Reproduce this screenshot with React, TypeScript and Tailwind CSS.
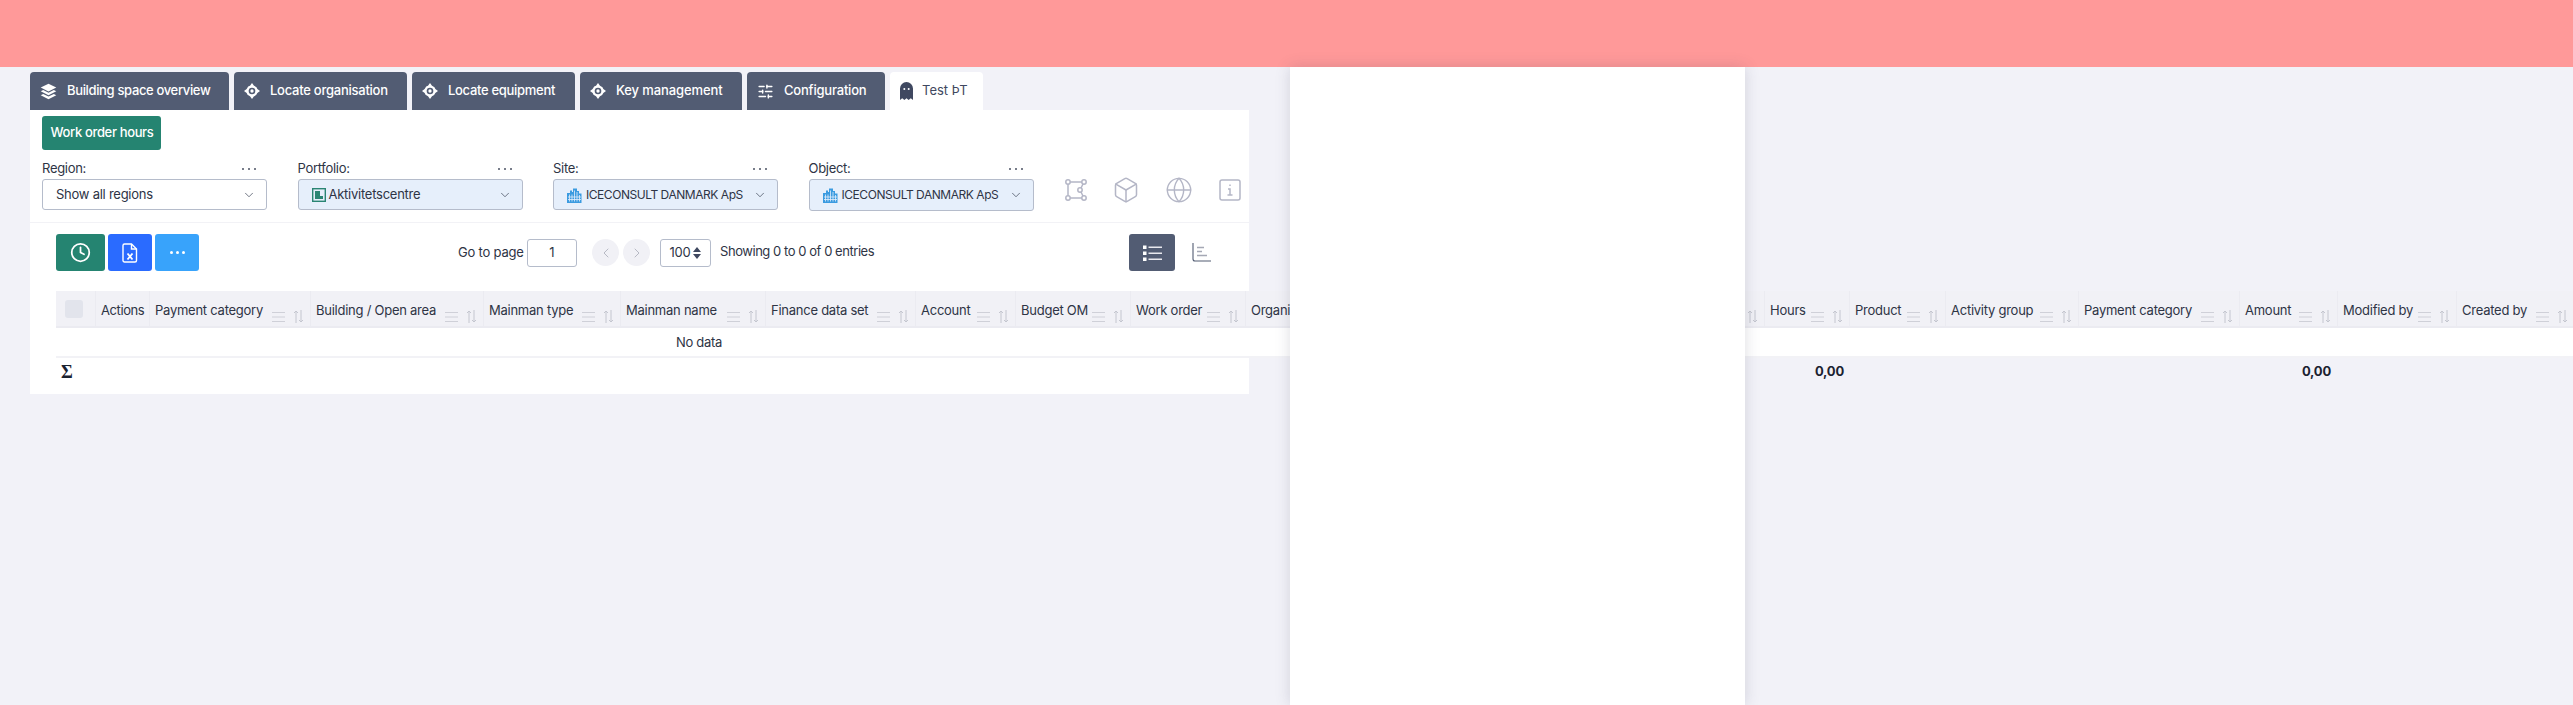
import React from "react";
import { Box, ChevronDown, ChevronLeft, ChevronRight, Clock, Globe, SlidersHorizontal } from "lucide-react";

const Layers = () => (
  <svg width="17" height="17" viewBox="0 0 24 24" fill="white">
    <path d="M12 1 L23 6.5 L12 12 L1 6.5Z" />
    <path d="M4.5 10 L12 13.8 L19.5 10 L23 11.8 L12 17.3 L1 11.8Z" />
    <path d="M4.5 15.5 L12 19.2 L19.5 15.5 L23 17.3 L12 23 L1 17.3Z" />
  </svg>
);
const Locate = () => (
  <svg width="16" height="16" viewBox="0 0 24 24">
    <path d="M12 0 L15 4 Q20 6 20 9 L24 12 L20 15 Q18 20 15 20 L12 24 L9 20 Q4 18 4 15 L0 12 L4 9 Q6 4 9 4Z" fill="white" />
    <circle cx="12" cy="12" r="5" fill="#525c73" />
    <circle cx="12" cy="12" r="2.5" fill="white" />
  </svg>
);
const Ghost = () => (
  <svg width="13" height="18" viewBox="0 0 13 18" className="text-[#3f4860]">
    <path d="M0 6.5a6.5 6.5 0 0 1 13 0V18l-2.2-1.8L8.6 18l-2.1-1.8L4.400 18l-2.200-1.800L0 18Z" fill="currentColor" />
    <circle cx="4.300" cy="7" r="1" fill="white" />
    <circle cx="8.700" cy="7" r="1" fill="white" />
  </svg>
);
const City = () => (
  <svg width="16" height="16" viewBox="0 0 16 16" className="shrink-0">
    <path d="M0 6h3V3.500h2V5h1V1.500h4V4h2v2.500h2.500V16H0Z" fill="#3b9be0" />
    <path d="M2.500 7.500v7M5 7.500v7M7.500 3.500v11M10 5v9.500M12.500 8v6.500M1 10h13M1 12.500h13" stroke="#e6effb" strokeWidth="0.8" />
  </svg>
);
const Picture = () => (
  <svg width="14" height="14" viewBox="0 0 14 14" className="shrink-0">
    <rect x="0.700" y="0.700" width="12.600" height="12.600" fill="#e6effb" stroke="#2a8573" strokeWidth="1.400" />
    <path d="M3 3h5v5h3v3H3Z" fill="#2a8573" />
  </svg>
);
const BoundingBox = () => (
  <svg width="22" height="22" viewBox="0 0 22 22" fill="none" stroke="#b4b6c6" strokeWidth="1.500">
    <circle cx="3" cy="3" r="2.200" />
    <circle cx="19" cy="3" r="2.200" />
    <circle cx="3" cy="19" r="2.200" />
    <circle cx="19" cy="19" r="2.200" />
    <circle cx="15" cy="11" r="2.200" />
    <path d="M5.200 3h11.600M5.200 19h11.600M3 5.200v11.600M18 5l-2 4M16 13l2 4" />
  </svg>
);
const InfoSquare = () => (
  <svg width="22" height="22" viewBox="0 0 22 22" fill="none" stroke="#b4b6c6" strokeWidth="1.500">
    <rect x="1" y="1" width="20" height="20" rx="2" />
    <path d="M11 5.500v1.500M9 10h2v6M8.500 16h5" />
  </svg>
);
const FileExcel = () => (
  <svg width="16" height="20" viewBox="0 0 16 20" fill="none" stroke="white" strokeWidth="1.400">
    <path d="M2.500 1h7l5 5v11.500a1.500 1.500 0 0 1-1.500 1.500H2.500A1.500 1.500 0 0 1 1 17.500v-15A1.500 1.500 0 0 1 2.500 1Z" />
    <path d="M9.500 1v5h5" />
    <path d="M5.500 10.500l5 6M10.500 10.500l-5 6" strokeWidth="1.800" />
  </svg>
);
const ListIcon = () => (
  <svg width="19" height="16" viewBox="0 0 19 16">
    <rect x="0" y="0.500" width="3.500" height="3.500" fill="white" />
    <rect x="0" y="6.500" width="3.500" height="3.500" fill="white" />
    <rect x="0" y="12.500" width="3.500" height="3.500" fill="white" />
    <rect x="5.500" y="1.500" width="13.500" height="1.500" fill="#e8e8ee" />
    <rect x="5.500" y="7.500" width="13.500" height="1.500" fill="#e8e8ee" />
    <rect x="5.500" y="13.500" width="13.500" height="1.500" fill="#e8e8ee" />
  </svg>
);
const ChartIcon = () => (
  <svg width="19" height="19" viewBox="0 0 19 19" fill="none">
    <path d="M1 0v16a2 2 0 0 0 2 2h16" stroke="#525c73" strokeWidth="1.100" />
    <path d="M5 4.500h7M5 8.500h5M5 12.500h10" stroke="#a5a8b5" strokeWidth="1.300" />
  </svg>
);
const Dots = ({ cls }: { cls: string }) => (
  <span className={`flex gap-[4px] ${cls}`}>
    <i className="size-[2px] rounded-full bg-current" />
    <i className="size-[2px] rounded-full bg-current" />
    <i className="size-[2px] rounded-full bg-current" />
  </span>
);
const ToolbarDots = () => (
  <span className="flex gap-[3px] text-white">
    <i className="size-[3px] rounded-full bg-current" />
    <i className="size-[3px] rounded-full bg-current" />
    <i className="size-[3px] rounded-full bg-current" />
  </span>
);
const ColIcons = () => (
  <span className="ml-auto flex shrink-0 items-center gap-[8px] pt-[6px] pr-[6px]">
    <svg width="13" height="12" viewBox="0 0 13 12" stroke="#cfd0d8" strokeWidth="1">
      <path d="M0 1.500h13M0 6h13M0 10.500h13" />
    </svg>
    <svg width="11" height="13" viewBox="0 0 11 13" fill="none" stroke="#c4c6cf" strokeWidth="1">
      <path d="M3 13V1M1 3l2-2 2 2M8 0v12M6 10l2 2 2-2" />
    </svg>
  </span>
);

const tabs = [
  { label: "Building space overview", w: "w-[199px]", icon: <Layers />, track: "tracking-[-0.35px]" },
  { label: "Locate organisation", w: "w-[173px]", icon: <Locate />, track: "tracking-[-0.25px]" },
  { label: "Locate equipment", w: "w-[163px]", icon: <Locate />, track: "tracking-[-0.3px]" },
  { label: "Key management", w: "w-[162px]", icon: <Locate />, track: "tracking-[-0.1px]" },
  { label: "Configuration", w: "w-[138px]", icon: <SlidersHorizontal size={17} color="white" />, track: "tracking-[-0.2px]" },
];

const filters = [
  { label: "Region:", value: "Show all regions", blue: false, icon: null, h: "h-[31px]", val: "text-[13px] tracking-[-0.25px]" },
  { label: "Portfolio:", value: "Aktivitetscentre", blue: true, icon: <Picture />, h: "h-[31px]", val: "text-[13px] tracking-[-0.25px]" },
  { label: "Site:", value: "ICECONSULT DANMARK ApS", blue: true, icon: <City />, h: "h-[31px]", val: "text-[12px] tracking-[-0.45px]" },
  { label: "Object:", value: "ICECONSULT DANMARK ApS", blue: true, icon: <City />, h: "h-[32px]", val: "text-[12px] tracking-[-0.45px]" },
];

const cols = [
  { label: "Payment category", w: "w-[161px]" },
  { label: "Building / Open area", w: "w-[173px]" },
  { label: "Mainman type", w: "w-[137px]" },
  { label: "Mainman name", w: "w-[145px]" },
  { label: "Finance data set", w: "w-[150px]" },
  { label: "Account", w: "w-[100px]" },
  { label: "Budget OM", w: "w-[115px]" },
  { label: "Work order", w: "w-[115px]" },
  { label: "Organisation", w: "w-[519px]" },
  { label: "Hours", w: "w-[85px]" },
  { label: "Product", w: "w-[96px]" },
  { label: "Activity group", w: "w-[133px]" },
  { label: "Payment category", w: "w-[161px]" },
  { label: "Amount", w: "w-[98px]" },
  { label: "Modified by", w: "w-[119px]" },
  { label: "Created by", w: "w-[118px]" },
];

export default function App() {
  return (
    <div className="relative h-[705px] w-[2573px] overflow-hidden bg-[#f2f2f8] font-['Inter','Liberation_Sans',sans-serif] text-[#2e3445]">
      <div className="h-[67px] bg-[#ff9999]" />

      <div className="ml-[30px] mt-[5px] flex h-[38px] gap-[5px]">
        {tabs.map((t) => (
          <div
            key={t.label}
            className={`flex items-center gap-[10px] rounded-t-[4px] bg-[#525c73] pl-[10px] text-[13px] font-medium text-white ${t.w} ${t.track}`}
          >
            {t.icon}
            <span className="whitespace-nowrap">{t.label}</span>
          </div>
        ))}
        <div className="flex w-[93px] items-center gap-[9px] rounded-t-[4px] bg-white pl-[10px] text-[13px] text-[#3f4860]">
          <Ghost />
          <span>Test ÞT</span>
        </div>
      </div>

      <div className="ml-[30px] h-[284px] w-[1219px] bg-white">
        <div className="h-[113px] border-b border-[#f2f2f6] pl-[12px] pt-[6px]">
          <button className="flex h-[34px] w-[119px] items-center justify-center rounded-[3px] bg-[#258471] pl-[1px] text-[13px] font-medium tracking-[-0.35px] text-white">
            Work order hours
          </button>
          <div className="mt-[10px] flex">
            <div className="flex gap-[30.5px]">
              {filters.map((f) => (
                <div key={f.label} className="w-[225px]">
                  <div className="flex h-[19px] items-center justify-between pb-[2px] pr-[11px] text-[13px] leading-none tracking-[-0.3px]">
                    <span>{f.label}</span>
                    <Dots cls="text-[#4b5263]" />
                  </div>
                  <div
                    className={`flex items-center justify-between rounded-[3px] border border-[#b5bccb] pl-[13px] pr-[10px] ${f.h} ${
                      f.blue ? "bg-[#e6effb]" : "bg-white"
                    }`}
                  >
                    <span className={`flex items-center gap-[3px] whitespace-nowrap ${f.val}`}>
                      {f.icon}
                      {f.value}
                    </span>
                    <ChevronDown size={14} strokeWidth={1.25} className="shrink-0 text-[#40485a]" />
                  </div>
                </div>
              ))}
            </div>
            <div className="ml-[31px] mt-[16px] flex h-[28px] items-center">
              <BoundingBox />
              <Box size={28} strokeWidth={1.3} color="#b4b6c6" className="ml-[25px]" />
              <Globe size={28} strokeWidth={1.2} color="#b4b6c6" className="ml-[25px]" />
              <span className="ml-[26px]">
                <InfoSquare />
              </span>
            </div>
          </div>
        </div>

        <div className="ml-[26px] mr-[38px] mt-[11px] flex h-[37px] items-center">
          <button className="flex h-[37px] w-[49px] items-center justify-center rounded-[3px] bg-[#258471]">
            <Clock size={21} color="white" strokeWidth={2} />
          </button>
          <button className="ml-[3px] flex h-[37px] w-[44px] items-center justify-center rounded-[3px] bg-[#2a6bff]">
            <FileExcel />
          </button>
          <button className="ml-[3px] flex h-[37px] w-[44px] items-center justify-center rounded-[3px] bg-[#38a3fb]">
            <ToolbarDots />
          </button>
          <span className="ml-[259px] w-[69px] whitespace-nowrap text-[13px] tracking-[-0.2px]">Go to page</span>
          <div className="flex h-[28px] w-[50px] items-center justify-center rounded-[3px] border border-[#b5bccb] text-[13px]">1</div>
          <div className="ml-[15px] flex size-[27px] items-center justify-center rounded-full bg-[#f1f1f6]">
            <ChevronLeft size={16} strokeWidth={1} className="text-[#9a9dab]" />
          </div>
          <div className="ml-[4px] flex size-[27px] items-center justify-center rounded-full bg-[#f1f1f6]">
            <ChevronRight size={16} strokeWidth={1} className="text-[#9a9dab]" />
          </div>
          <div className="ml-[10px] flex h-[28px] w-[51px] items-center justify-center gap-[3px] rounded-[3px] border border-[#b5bccb] text-[13px] tracking-[-0.3px]">
            100
            <svg width="8" height="12" viewBox="0 0 8 12" fill="#3f4860">
              <path d="M4 0l4 5H0ZM4 12L0 7h8Z" />
            </svg>
          </div>
          <span className="ml-[9px] whitespace-nowrap pb-[2px] text-[13px] tracking-[-0.45px]">Showing 0 to 0 of 0 entries</span>
          <button className="ml-auto flex h-[37px] w-[46px] items-center justify-center rounded-[3px] bg-[#525c73]">
            <ListIcon />
          </button>
          <span className="ml-[17px]">
            <ChartIcon />
          </span>
        </div>

        <div className="ml-[26px] mt-[20px] w-[2517px]">
          <div className="flex h-[37px] border-b-2 border-[#ebebf1] bg-[#f1f1f6] text-[13px] leading-none">
            <div className="flex w-[40px] shrink-0 border-r border-[#ebebf1] pl-[9px] pt-[9px]">
              <span className="size-[18px] rounded-[3px] bg-[#e2e4ec]" />
            </div>
            <div className="w-[54px] shrink-0 border-r border-[#ebebf1] pl-[5px] pt-[13px] tracking-[-0.4px]">Actions</div>
            {cols.map((c, i) => (
              <div
                key={i}
                className={`flex shrink-0 items-start border-r border-[#ebebf1] pl-[5px] pt-[13px] tracking-[-0.25px] ${c.w}`}
              >
                <span className="whitespace-nowrap">{c.label}</span>
                <ColIcons />
              </div>
            ))}
          </div>
          <div className="flex h-[30px] items-center border-b-2 border-[#f2f2f6] bg-white pt-[1px] text-[13px]">
            <span className="ml-[620px] tracking-[-0.3px]">No data</span>
          </div>
          <div className="relative flex h-[28px] items-center">
            <span className="ml-[5px] font-['Liberation_Serif',serif] text-[18px] font-bold leading-none text-[#1b2230]">Σ</span>
            <span className="absolute left-[1738px] w-[50px] text-right text-[13px] font-bold tracking-[-0.2px] text-[#1b2230]">0,00</span>
            <span className="absolute left-[2225px] w-[50px] text-right text-[13px] font-bold tracking-[-0.2px] text-[#1b2230]">0,00</span>
          </div>
        </div>
      </div>

      <div className="absolute bottom-0 left-[1290px] top-[67px] w-[455px] bg-white shadow-[0_0_14px_rgba(60,60,90,0.18)]" />
    </div>
  );
}
